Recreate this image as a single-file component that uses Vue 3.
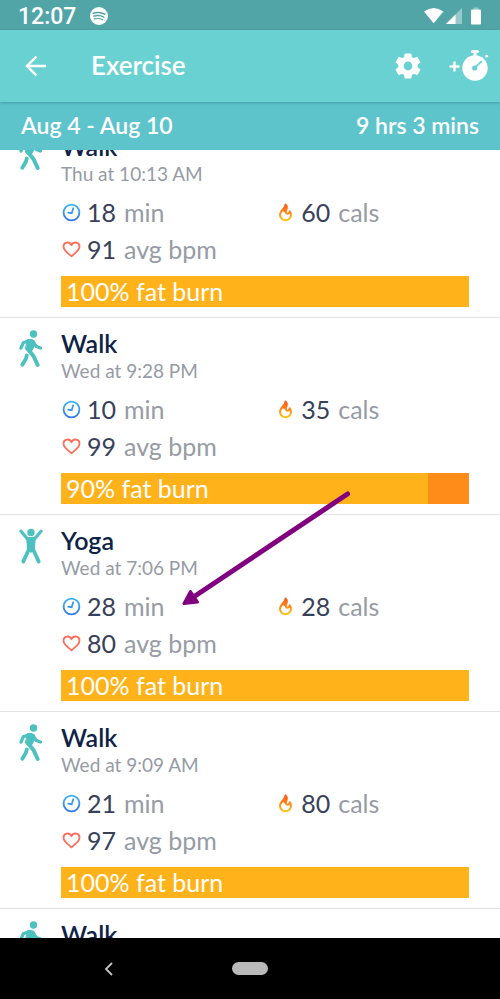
<script setup>
const workouts = [
  { name: 'Walk', icon: 'walk', when: 'Thu at 10:13 AM', minutes: 18, cals: 60, bpm: 91, fatBurn: 100 },
  { name: 'Walk', icon: 'walk', when: 'Wed at 9:28 PM', minutes: 10, cals: 35, bpm: 99, fatBurn: 90 },
  { name: 'Yoga', icon: 'yoga', when: 'Wed at 7:06 PM', minutes: 28, cals: 28, bpm: 80, fatBurn: 100 },
  { name: 'Walk', icon: 'walk', when: 'Wed at 9:09 AM', minutes: 21, cals: 80, bpm: 97, fatBurn: 100 },
  { name: 'Walk', icon: 'walk' },
]
</script>

<template>
  <div class="screen">
    <div class="status">
      <span class="time">12:07</span>
      <svg class="spotify" viewBox="0 0 18 18" aria-hidden="true">
        <circle cx="9" cy="9" r="9" fill="#fff" />
        <g fill="none" stroke="#52a5a7" stroke-linecap="round">
          <path d="M3.3 6.3Q9.5 4.4 14.8 7.2" stroke-width="1.6" />
          <path d="M3.8 9.2Q9.3 7.6 13.8 10.1" stroke-width="1.4" />
          <path d="M4.3 11.9Q9 10.7 12.8 12.8" stroke-width="1.1" />
        </g>
      </svg>
      <svg class="signals" viewBox="0 0 58 18" aria-hidden="true">
        <path d="M0 4.6Q9.7-2.6 19.4 4.6L9.7 16.2Z" fill="#fff" />
        <path d="M38 1V17H22Z" fill="#fff" opacity=".4" />
        <path d="M31.5 7.5V17H22Z" fill="#fff" />
        <path d="M49.5 .5h5v2h-5z" fill="#fff" opacity=".4" />
        <rect x="47" y="2.5" width="10" height="15" rx="1" fill="#fff" />
      </svg>
    </div>

    <header class="toolbar">
      <button class="icon-btn back" aria-label="Back">
        <svg width="22" height="22" viewBox="0 0 22 22" fill="none" stroke="#fff" stroke-width="2.4">
          <path d="M21 11H2.5M11.3 1.7L2 11l9.3 9.3" />
        </svg>
      </button>
      <h1>Exercise</h1>
      <button class="icon-btn" aria-label="Settings">
        <svg width="26" height="26" viewBox="0 0 26 26">
          <path
            fill="#fff" stroke="#fff" stroke-width="1.2" stroke-linejoin="round" fill-rule="evenodd"
            d="M10.2 1h5.600l.6 3.500 2.300 1.300 3.300-1.300 2.800 4.800-2.800 2.300v2.800l2.800 2.300-2.800 4.800-3.300-1.300-2.300 1.300-.6 3.500h-5.600l-.6-3.500-2.300-1.300L4 21.500l-2.800-4.800L4 14.400v-2.800L1.200 9.300 4 4.500l3.300 1.300 2.300-1.300ZM13 8a5 5 0 1 0 0 10a5 5 0 1 0 0-10Z"
          />
        </svg>
      </button>
      <button class="icon-btn add" aria-label="Start exercise">
        <svg width="40" height="32" viewBox="0 0 40 32" fill="none" stroke="#fff" stroke-linecap="round">
          <path d="M1.500 17.500h8M5.500 13.500v8" stroke-width="2.400" />
          <circle cx="26" cy="19" r="12.700" fill="#fff" stroke="none" />
          <path d="M23.500 2.500h5" stroke-width="3" />
          <path d="M26 3v5" stroke-width="3" stroke-linecap="butt" />
          <circle cx="37.700" cy="7.200" r="1.400" fill="#fff" stroke="none" />
          <circle cx="25.700" cy="19" r="2.600" fill="#69d1d1" stroke="none" />
          <path d="M26 18.700l6.200-6" stroke="#69d1d1" stroke-width="1.700" />
        </svg>
      </button>
    </header>

    <div class="summary">
      <span>Aug 4 - Aug 10</span>
      <span>9 hrs 3 mins</span>
    </div>

    <main class="list">
      <article v-for="(w, i) in workouts" :key="i" class="workout">
        <div class="figure">
          <svg v-if="w.icon === 'walk'" width="24" height="38" viewBox="0 0 24 38" fill="none" stroke="#4dc0c0" stroke-linecap="round" stroke-linejoin="round">
            <circle cx="14.500" cy="4" r="3.700" fill="#4dc0c0" stroke="none" />
            <path d="M2 18.200L4.200 12.800 10 10.800" stroke-width="3.200" />
            <path d="M14.500 12.500l2.800 4 4.200 1.500" stroke-width="3.200" />
            <path d="M8.500 9.800Q12 8.500 15.200 10.600L16 14.200 13 20.500 8.600 21.200 6.700 19.200Z" fill="#4dc0c0" stroke-width="1" />
            <path d="M9.500 20L14.500 26l4.200 9" stroke-width="4" />
            <path d="M7.800 25.500L6.800 29 3.300 34.800" stroke-width="3.800" />
          </svg>
          <svg v-else width="24" height="38" viewBox="0 0 24 38" fill="none" stroke="#4dc0c0" stroke-linecap="round" stroke-linejoin="round">
            <circle cx="12" cy="5.400" r="3.700" fill="#4dc0c0" stroke="none" />
            <path d="M2 4.300L8.500 12M22 4.300L15.500 12" stroke-width="3.200" />
            <path d="M8 11.300Q12 9.700 16 11.300L15.200 22L12 25L8.800 22Z" fill="#4dc0c0" stroke-width="1.500" />
            <path d="M10.300 21.500L4.300 34.500M13.700 21.500l6 13" stroke-width="3.800" />
          </svg>
        </div>
        <div class="details">
          <h2>{{ w.name }}</h2>
          <template v-if="w.when">
            <p class="when">{{ w.when }}</p>
            <div class="stats">
              <div class="stat">
                <svg width="20" height="20" viewBox="0 0 20 20" fill="none" aria-hidden="true">
                  <defs>
                    <linearGradient :id="'clock' + i" x1="0" y1="0" x2="0" y2="1">
                      <stop offset="0" stop-color="#36b3f5" /><stop offset="1" stop-color="#3278e4" />
                    </linearGradient>
                  </defs>
                  <circle cx="10.500" cy="10.500" r="7.900" :stroke="`url(#clock${i})`" stroke-width="1.800" />
                  <path d="M12.200 6.200L10.700 11.200 7.200 10.600" stroke="#3596ee" stroke-width="1.700" stroke-linecap="round" />
                </svg>
                <b>{{ w.minutes }}</b> min
              </div>
              <div class="stat">
                <svg width="18" height="20" viewBox="0 0 18 20" fill="none" aria-hidden="true">
                  <defs>
                    <linearGradient :id="'flame' + i" gradientUnits="userSpaceOnUse" x1="0" y1="1" x2="0" y2="19">
                      <stop offset="0" stop-color="#ff4e14" /><stop offset=".55" stop-color="#ff8c1a" /><stop offset="1" stop-color="#ffc814" />
                    </linearGradient>
                  </defs>
                  <path
                    :stroke="`url(#flame${i})`" stroke-width="2" stroke-linejoin="round"
                    d="M8.500 2.500C9 6 3 8.500 3 13a5.500 5.200 0 0 0 11 0c0-1.700-.5-2.900-1.200-3.700-.3 1.600-1 2.300-2.200 2.500C8.500 11.700 8.500 9.500 9.400 7.500 10.300 5.500 9.800 3.800 8.500 2.500Z"
                  />
                  <path d="M8.500 2.500C9 5 6.500 7 5.200 8.800L8 10.500C8.400 8.500 10.500 6 9.600 4Z" :fill="`url(#flame${i})`" />
                </svg>
                <b>{{ w.cals }}</b> cals
              </div>
              <div class="stat">
                <svg width="20" height="20" viewBox="0 0 20 20" fill="none" aria-hidden="true">
                  <path
                    stroke="#fa6e5a" stroke-width="1.800" stroke-linejoin="round"
                    d="M10.500 17.200C7.500 14.800 2.500 11.700 2.500 7.600c0-4.600 6-5.600 8-1.400 2-4.200 8-3.200 8 1.400 0 4.100-5 7.200-8 9.600Z"
                  />
                </svg>
                <b>{{ w.bpm }}</b> avg bpm
              </div>
            </div>
            <div class="zone">
              <div class="fat" :style="{ width: w.fatBurn + '%' }">{{ w.fatBurn }}% fat burn</div>
            </div>
          </template>
        </div>
      </article>

      <svg class="pointer" width="176" height="120" viewBox="0 0 176 120" aria-hidden="true">
        <path d="M168.500 5L16 107" stroke="#80007f" stroke-width="5" stroke-linecap="round" />
        <path d="M5 114.500L11.500 102.500 18.500 113Z" fill="#80007f" stroke="#80007f" stroke-width="3" stroke-linejoin="round" />
      </svg>
    </main>

    <nav class="system-nav">
      <button class="icon-btn" aria-label="System back">
        <svg width="10" height="14" viewBox="0 0 10 14" fill="none" stroke="#c4c4c4" stroke-width="1.800">
          <path d="M8 1L2 7l6 6" />
        </svg>
      </button>
      <button class="home" aria-label="Home"></button>
      <span></span>
    </nav>
  </div>
</template>

<style>
body {
  margin: 0;
}
</style>

<style scoped>
.screen {
  display: flex;
  flex-direction: column;
  height: 100vh;
  background: #fff;
  font-family: Lato, "Open Sans", sans-serif;
  color: #969ba5;
}
h1,
h2,
p {
  margin: 0;
}
svg {
  display: block;
  flex: none;
}
.icon-btn {
  display: flex;
  padding: 0;
  border: 0;
  background: none;
}
.status {
  display: flex;
  align-items: center;
  box-sizing: border-box;
  height: 30px;
  padding: 1px 18px 0;
  background: #52a5a7;
}
.time {
  padding-top: 2px;
  font: 500 23px/28px Roboto, sans-serif;
  color: #fff;
}
.spotify {
  width: 18px;
  height: 18px;
  margin-left: 14px;
}
.signals {
  width: 58px;
  height: 18px;
  margin-left: auto;
}
.toolbar {
  position: relative;
  display: flex;
  align-items: center;
  height: 72px;
  padding: 0 11px 0 25px;
  background: #69d1d1;
  box-shadow: 0 1px 3px rgba(0, 60, 70, 0.3);
}
.toolbar h1 {
  flex: 1;
  margin-left: 44px;
  padding-bottom: 2px;
  font-size: 26px;
  line-height: 32px;
  font-weight: 600;
  color: #fff;
}
.add {
  margin-left: 28px;
}
.toolbar .add svg {
  margin-bottom: 2px;
}
.summary {
  display: flex;
  align-items: center;
  justify-content: space-between;
  box-sizing: border-box;
  height: 48px;
  padding: 0 21px 2px;
  background: #5dc4cc;
  font-size: 23px;
  font-weight: 600;
  color: #fff;
}
.list {
  position: relative;
  flex: 1;
  min-height: 0;
  overflow: hidden;
}
.workout {
  display: flex;
  padding: 9px 31px 10px 19px;
  border-bottom: 1px solid #e2e3e4;
}
/* The list is shown partly scrolled under the summary bar. */
.workout:first-child {
  margin-top: -29px;
}
.figure {
  width: 42px;
  padding-top: 3px;
}
.details {
  flex: 1;
}
.details h2 {
  font-size: 25px;
  line-height: 32px;
  font-weight: 600;
  color: #0f2346;
}
.when {
  font-size: 19px;
  line-height: 24px;
}
.stats {
  display: grid;
  grid-template-columns: 53% 47%;
  grid-auto-rows: 37px;
  padding: 7px 0 9px;
}
.stat {
  display: flex;
  align-items: center;
  gap: 6px;
  font-size: 25px;
}
.stat b {
  margin-right: 2px;
  font-weight: 400;
  color: #37415a;
}
.zone {
  height: 31px;
  background: #ff8c19;
}
.fat {
  box-sizing: border-box;
  height: 31px;
  padding-left: 5px;
  background: #ffb219;
  font-size: 25px;
  line-height: 30px;
  color: #fff;
}
.pointer {
  position: absolute;
  left: 179px;
  top: 339px;
}
.system-nav {
  display: grid;
  grid-template-columns: 1fr 36px 1fr;
  align-items: center;
  height: 61px;
  background: #000;
}
.system-nav .icon-btn {
  justify-self: center;
  padding-right: 14px;
}
.home {
  height: 13px;
  padding: 0;
  border: 0;
  border-radius: 7px;
  background: #b9b9b9;
}
</style>
